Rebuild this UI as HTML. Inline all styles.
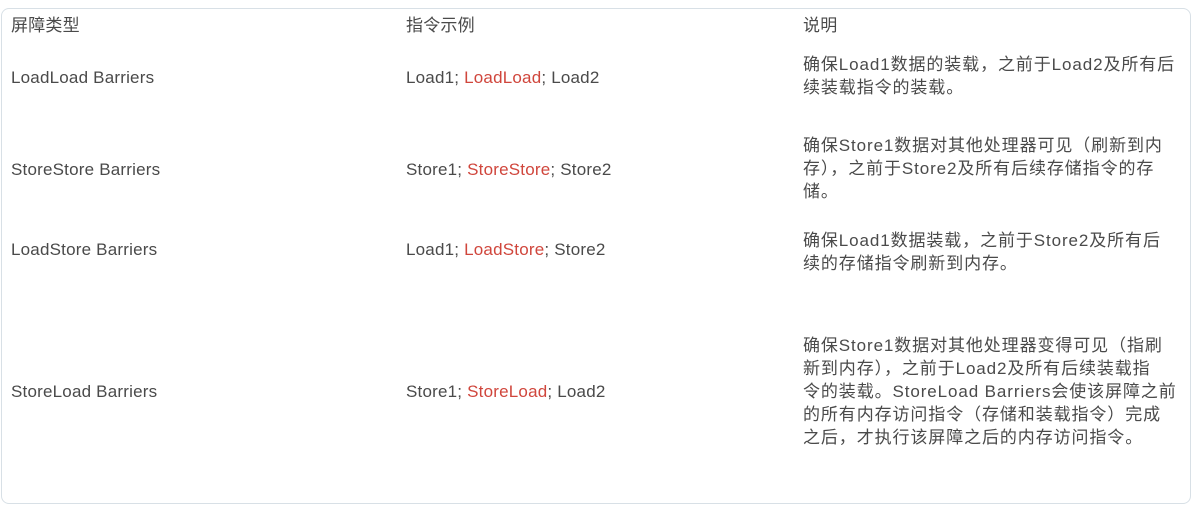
<!DOCTYPE html>
<html><head><meta charset="utf-8"><style>
body{margin:0;width:1193px;height:507px;background:#fff;overflow:hidden;position:relative;font-family:"Liberation Sans","Noto Sans CJK SC",sans-serif;font-size:17px;letter-spacing:0.2px;color:#4a4a4a}
.frame{position:absolute;left:1px;top:8px;width:1190px;height:496px;border:1px solid #d8e0e6;border-radius:8px;box-sizing:border-box}
.t{position:absolute;white-space:nowrap;line-height:22px}
.r{color:#d0463c}
.d{line-height:23px;letter-spacing:0.9px}
</style></head><body>
<div class="frame"></div>
<div class="t" style="left:11px;top:15px">屏障类型</div>
<div class="t" style="left:406px;top:15px">指令示例</div>
<div class="t" style="left:803px;top:15px">说明</div>

<div class="t" style="left:11px;top:67px">LoadLoad Barriers</div>
<div class="t" style="left:406px;top:67px">Load1; <span class="r">LoadLoad</span>; Load2</div>
<div class="t d" style="left:803px;top:53px">确保Load1数据的装载，之前于Load2及所有后<br>续装载指令的装载。</div>

<div class="t" style="left:11px;top:159px">StoreStore Barriers</div>
<div class="t" style="left:406px;top:159px">Store1; <span class="r">StoreStore</span>; Store2</div>
<div class="t d" style="left:803px;top:134px">确保Store1数据对其他处理器可见（刷新到内<br>存），之前于Store2及所有后续存储指令的存<br>储。</div>

<div class="t" style="left:11px;top:239px">LoadStore Barriers</div>
<div class="t" style="left:406px;top:239px">Load1; <span class="r">LoadStore</span>; Store2</div>
<div class="t d" style="left:803px;top:229px">确保Load1数据装载，之前于Store2及所有后<br>续的存储指令刷新到内存。</div>

<div class="t" style="left:11px;top:381px">StoreLoad Barriers</div>
<div class="t" style="left:406px;top:381px">Store1; <span class="r">StoreLoad</span>; Load2</div>
<div class="t d" style="left:803px;top:334px">确保Store1数据对其他处理器变得可见（指刷<br>新到内存），之前于Load2及所有后续装载指<br>令的装载。StoreLoad Barriers会使该屏障之前<br>的所有内存访问指令（存储和装载指令）完成<br>之后，才执行该屏障之后的内存访问指令。</div>
</body></html>
